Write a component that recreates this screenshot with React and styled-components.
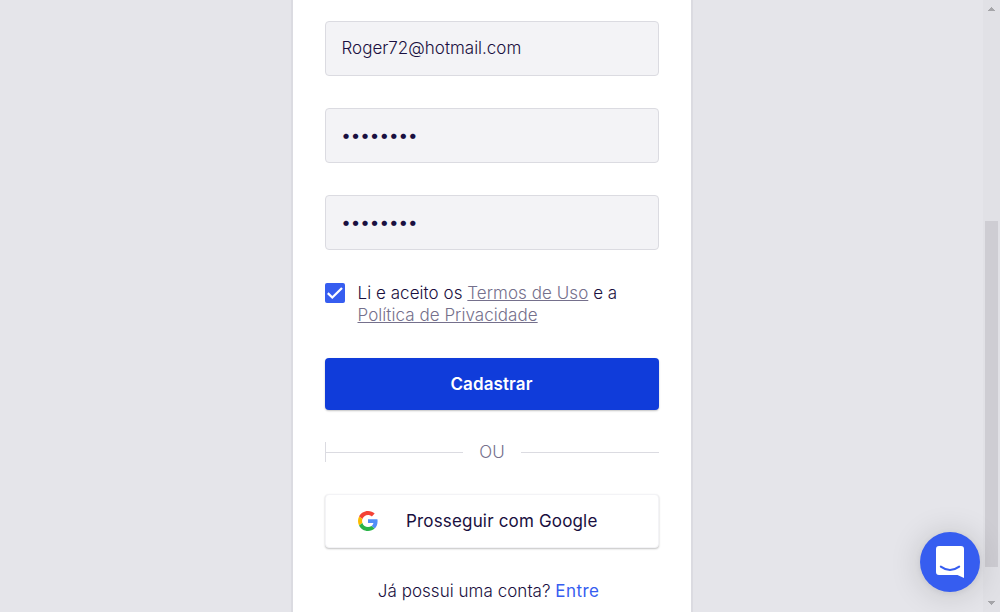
import React from "react";
import styled, { createGlobalStyle } from "styled-components";

const Global = createGlobalStyle`
  * { box-sizing: border-box; }
  html, body { margin: 0; height: 100%; overflow: hidden; }
  body {
    background: #e5e5ea;
    font-family: Inter, "Liberation Sans", sans-serif;
    color: #190f40;
  }
`;

const Page = styled.div`
  display: grid;
  grid-template-columns: 1fr 17px;
  width: 1000px;
  height: 612px;
  overflow: hidden;
`;

const Main = styled.main`
  display: flex;
  justify-content: center;
  padding-left: 1px;
`;

const Card = styled.form`
  width: 402px;
  height: 612px;
  margin: 0;
  padding: 21px 32px 0;
  background: #fff;
  border: solid #dbdbe1;
  border-width: 0 2px;
  overflow: hidden;
`;

const Field = styled.input`
  display: block;
  width: 334px;
  height: 55px;
  margin: 0 0 32px;
  padding: 0 15.5px 1px;
  border: 1px solid #dbdbe1;
  border-radius: 4px;
  outline: 0;
  background: #f3f3f6;
  color: #190f40;
  font: 300 17px Inter, sans-serif;

  &[type="password"] {
    padding-left: 15.5px;
    font-weight: 500;
    letter-spacing: 0.47px;
  }
`;

const Terms = styled.label`
  display: flex;
  gap: 12.5px;
  height: 44px;
  font-size: 17px;
  font-weight: 300;
  line-height: 22px;
  letter-spacing: 0.05px;
`;

const CheckBox = styled.span`
  flex: none;
  display: grid;
  width: 20px;
  height: 20px;
  margin-top: 1px;
  border-radius: 2px;
  background: #365df0;
`;

const TermsLink = styled.a`
  color: #75708c;
  text-decoration: underline;
`;

const Submit = styled.button`
  display: block;
  width: 334px;
  height: 52px;
  margin-top: 32px;
  padding: 0 1px 0 0;
  border: 0;
  border-radius: 4px;
  background: #103cda;
  box-shadow: 0 1px 2px rgba(0, 0, 0, 0.24);
  color: #fff;
  font: 600 17px Inter, sans-serif;
  letter-spacing: 0.12px;
`;

const Divider = styled.div`
  display: flex;
  align-items: center;
  height: 20px;
  margin-top: 32px;
  border-left: 1px solid #dbdbe1;
  color: #75708c;
  font-size: 17px;
  font-weight: 300;
  line-height: 20px;
`;

const Rule = styled.span`
  flex: ${(p) => (p.$start ? "0 0 137px" : "1")};
  height: 1px;
  margin-top: 1px;
  background: #dbdbe1;
`;

const DividerText = styled.span`
  width: 58px;
  text-align: center;
`;

const GoogleButton = styled.button`
  display: flex;
  align-items: center;
  width: 334px;
  height: 54px;
  margin-top: 32px;
  padding: 0 32px;
  border: 1px solid #f3f3f6;
  border-radius: 4px;
  background: #fff;
  box-shadow: 0 1px 2px rgba(0, 0, 0, 0.24);
  color: #190f40;
  font: 400 17px Inter, sans-serif;
  letter-spacing: 0.17px;
  gap: 28px;
`;

const SignIn = styled.p`
  margin: 32px 0 0;
  padding-right: 7px;
  text-align: center;
  font-size: 17px;
  font-weight: 300;
  line-height: 22px;
  letter-spacing: 0.04px;
`;

const SignInLink = styled.a`
  color: #365df0;
  font-weight: 400;
  letter-spacing: 0.4px;
`;

const ScrollTrack = styled.div`
  display: flex;
  flex-direction: column;
  align-items: center;
  padding: 7px 0 6px;
  background: #e1e1e6;
`;

const ScrollThumb = styled.div`
  width: 13px;
  height: 346px;
  margin: 210px 2px 34px;
  background: #cecdd3;
`;

const Chat = styled.button`
  position: absolute;
  left: 920px;
  top: 532px;
  width: 60px;
  height: 60px;
  padding: 0;
  border: 0;
  border-radius: 50%;
  background: #365df0;
  box-shadow: 0 1px 6px rgba(0, 0, 0, 0.06), 0 2px 32px rgba(0, 0, 0, 0.16);
`;

const Icon = styled.svg`
  display: block;
  flex: none;
`;

export default function App() {
  return (
    <>
      <Global />
      <Page>
        <Main>
          <Card>
            <Field type="text" readOnly value="Roger72@hotmail.com" />
            <Field type="password" readOnly value="password" />
            <Field type="password" readOnly value="password" />
            <Terms>
              <CheckBox>
                <Icon width="20" height="20" viewBox="0 0 20 20">
                  <path d="M2.800 10.200 7.300 14.500 17 5" fill="none" stroke="#fff" strokeWidth="2.300" />
                </Icon>
              </CheckBox>
              <span>
                Li e aceito os <TermsLink>Termos de Uso</TermsLink> e a<br />
                <TermsLink>Política de Privacidade</TermsLink>
              </span>
            </Terms>
            <Submit type="button">Cadastrar</Submit>
            <Divider>
              <Rule $start />
              <DividerText>OU</DividerText>
              <Rule />
            </Divider>
            <GoogleButton type="button">
              <Icon width="20" height="20" viewBox="0 0 48 48">
                <path fill="#f44336" d="M24 9.5c3.54 0 6.71 1.22 9.21 3.6l6.85-6.85C35.9 2.38 30.47 0 24 0 14.62 0 6.51 5.38 2.56 13.22l7.98 6.19C12.43 13.72 17.74 9.5 24 9.5z" />
                <path fill="#518ef8" d="M46.98 24.55c0-1.57-.15-3.09-.38-4.55H24v9.02h12.94c-.58 2.96-2.26 5.48-4.78 7.18l7.73 6c4.51-4.18 7.09-10.36 7.09-17.65z" />
                <path fill="#fbbb00" d="M10.53 28.59c-.48-1.45-.76-2.99-.76-4.59s.27-3.14.76-4.59l-7.98-6.19C.92 16.46 0 20.12 0 24s.92 7.54 2.56 10.78l7.97-6.19z" />
                <path fill="#28b446" d="M24 48c6.48 0 11.93-2.13 15.89-5.81l-7.73-6c-2.15 1.45-4.92 2.3-8.16 2.3-6.26 0-11.57-4.22-13.47-9.91l-7.98 6.19C6.51 42.62 14.62 48 24 48z" />
              </Icon>
              Prosseguir com Google
            </GoogleButton>
            <SignIn>
              Já possui uma conta? <SignInLink>Entre</SignInLink>
            </SignIn>
          </Card>
        </Main>
        <ScrollTrack>
          <Icon width="7" height="4" viewBox="0 0 7 4" shapeRendering="crispEdges">
            <path d="M3 0h1v1h1v1h1v1h1v1H0V3h1V2h1V1h1z" fill="#a6a6aa" />
          </Icon>
          <ScrollThumb />
          <Icon width="7" height="4" viewBox="0 0 7 4" shapeRendering="crispEdges">
            <path d="M0 0h7v1H6v1H5v1H4v1H3V3H2V2H1V1H0z" fill="#a6a6aa" />
          </Icon>
        </ScrollTrack>
      </Page>
      <Chat type="button" aria-label="Chat">
        <Icon width="60" height="60" viewBox="0 0 60 60">
          <path d="M19 14h22q3 0 3 3v29l-6.500-3H19q-3 0-3-3V17q0-3 3-3z" fill="#fff" />
          <path d="M20.800 34.600Q30 41.300 39.200 34.600" fill="none" stroke="#365df0" strokeWidth="2" strokeLinecap="round" />
        </Icon>
      </Chat>
    </>
  );
}
